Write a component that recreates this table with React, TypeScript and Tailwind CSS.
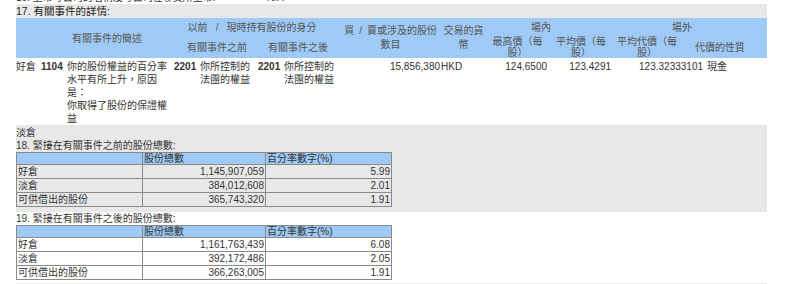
export default function App() {
  return (
    <div className="w-[800px] h-[284px] overflow-hidden bg-white font-['Liberation_Sans','Noto_Sans_CJK_TC',sans-serif] text-[#333]">
      <div className="ml-4 w-[751px]">
        {/* 16 */}
        <div className="-mt-[9px] flex h-[13px] text-[10px] leading-[13px]">
          <span className="w-[251px]">16. 上市母公司的名稱及母公司在聯交所上市:</span>
          <span>N/A</span>
        </div>
        {/* 17 */}
        <div className="h-[14px] bg-[#e8e8e8] text-[10.5px] leading-[14px] text-[#222]">17. 有關事件的詳情:</div>
        <table className="w-[751px] table-fixed border-collapse text-[10px]">
          <colgroup>
            <col className="w-[24px]" />
            <col className="w-[26px]" />
            <col className="w-[106px]" />
            <col className="w-[27px]" />
            <col className="w-[57px]" />
            <col className="w-[27px]" />
            <col className="w-[57px]" />
            <col className="w-[101px]" />
            <col className="w-[45px]" />
            <col className="w-[63px]" />
            <col className="w-[64px]" />
            <col className="w-[92px]" />
            <col className="w-[62px]" />
          </colgroup>
          <thead className="bg-[#9fcaf5] text-[#555]">
            <tr className="h-[18px]">
              <th colSpan={3} rowSpan={2} className="p-0 pl-[26px] font-normal leading-[13px]">有關事件的簡述</th>
              <th colSpan={4} className="p-0 pr-[8px] font-normal leading-[13px]">
                以前<span className="px-[8px]">/</span>現時持有股份的身分
              </th>
              <th rowSpan={2} className="p-0 font-normal leading-[14px]">
                買<span className="px-[5px]">/</span>賣或涉及的股份<br />數目
              </th>
              <th rowSpan={2} className="p-0 font-normal leading-[14px]">
                交易的貨<br />幣
              </th>
              <th colSpan={2} className="p-0 pr-[17px] font-normal leading-[13px]">場內</th>
              <th colSpan={2} className="p-0 pr-[16px] font-normal leading-[13px]">場外</th>
            </tr>
            <tr className="h-[22px]">
              <th colSpan={2} className="p-0 pl-[6px] font-normal leading-[13px]">有關事件之前</th>
              <th colSpan={2} className="p-0 font-normal leading-[13px]">有關事件之後</th>
              <th className="p-0 font-normal leading-[11px]">最高價（每<br />股）</th>
              <th className="p-0 font-normal leading-[11px]">平均價（每<br />股）</th>
              <th colSpan={2} className="p-0 font-normal">
                <div className="flex items-center">
                  <div className="w-[68px] text-center leading-[11px]">平均代價（每<br />股）</div>
                  <div className="w-[78px] text-center leading-[13px]">代價的性質</div>
                </div>
              </th>
            </tr>
          </thead>
          <tbody className="leading-[13px]">
            <tr className="align-top">
              <td className="p-0 pt-[2px] h-[67px]">好倉</td>
              <td className="p-0 pt-[2px] pl-[1px] font-bold">1104</td>
              <td className="p-0 pt-[2px] pl-[1px]">
                你的股份權益的百分率<br />水平有所上升，原因<br />是：<br />你取得了股份的保證權<br />益
              </td>
              <td className="p-0 pt-[2px] pl-[2px] font-bold">2201</td>
              <td className="p-0 pt-[2px] pl-[1px]">你所控制的<br />法團的權益</td>
              <td className="p-0 pt-[2px] pl-[2px] font-bold">2201</td>
              <td className="p-0 pt-[2px] pl-[1px]">你所控制的<br />法團的權益</td>
              <td className="p-0 pt-[2px] pr-[1px] text-right">15,856,380</td>
              <td className="p-0 pt-[2px]">HKD</td>
              <td className="p-0 pt-[2px] pr-[2px] text-right">124.6500</td>
              <td className="p-0 pt-[2px] pr-[2px] text-right">123.4291</td>
              <td className="p-0 pt-[2px] pr-[2px] text-right">123.32333101</td>
              <td className="p-0 pt-[2px] pl-[2px]">現金</td>
            </tr>
          </tbody>
        </table>
        {/* 淡倉 + 18 */}
        <div className="bg-[#e8e8e8] pt-[1px] pb-[5px]">
          <div className="text-[10px] leading-[13px]">淡倉</div>
          <div className="text-[10px] leading-[13px]">18. 緊接在有關事件之前的股份總數:</div>
          <SharesTable rows={[["好倉", "1,145,907,059", "5.99"], ["淡倉", "384,012,608", "2.01"], ["可供借出的股份", "365,743,320", "1.91"]]} />
        </div>
        {/* 19 */}
        <div className="bg-white pb-[3px]">
          <div className="text-[10px] leading-[13px]">19. 緊接在有關事件之後的股份總數:</div>
          <SharesTable rows={[["好倉", "1,161,763,439", "6.08"], ["淡倉", "392,172,486", "2.05"], ["可供借出的股份", "366,263,005", "1.91"]]} />
        </div>
        {/* 20 */}
        <div className="bg-[#e8e8e8] pt-[1px] text-[10px] leading-[13px]">20. 緊接在有關事件之後可供借出的股份數目:</div>
      </div>
    </div>
  );
}

function SharesTable({ rows }: { rows: string[][] }) {
  return (
    <table className="w-[375px] table-fixed border-collapse border border-[#8a8a8a] text-[10px] leading-[11px]">
      <colgroup>
        <col className="w-[126px]" />
        <col className="w-[123px]" />
        <col className="w-[126px]" />
      </colgroup>
      <thead>
        <tr className="h-[11px] bg-[#9fcaf5]">
          <th className="border border-[#8a8a8a] p-0"></th>
          <th className="border border-[#8a8a8a] p-0 pl-[1px] text-left font-normal">股份總數</th>
          <th className="border border-[#8a8a8a] p-0 pl-[1px] text-left font-normal">百分率數字(%)</th>
        </tr>
      </thead>
      <tbody>
        {rows.map((r) => (
          <tr key={r[0]} className="h-[14px]">
            <td className="border border-[#8a8a8a] p-0 pl-[1px]">{r[0]}</td>
            <td className="border border-[#8a8a8a] p-0 pr-[1px] text-right">{r[1]}</td>
            <td className="border border-[#8a8a8a] p-0 pr-[1px] text-right">{r[2]}</td>
          </tr>
        ))}
      </tbody>
    </table>
  );
}
